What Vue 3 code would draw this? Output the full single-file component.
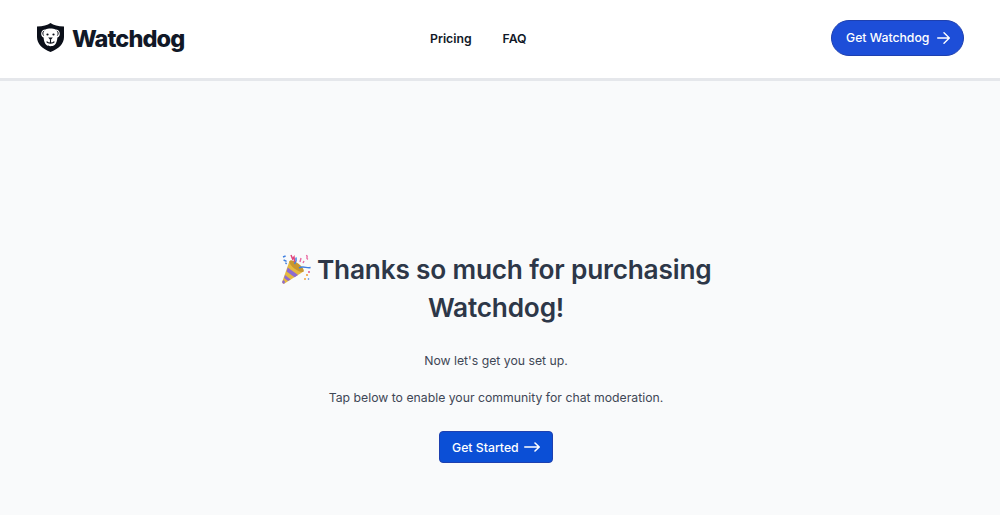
<script setup>
</script>

<template>
  <div class="page">
    <header class="nav">
      <div class="brand">
        <svg class="shield" viewBox="0 0 27 29" width="27" height="29">
          <path d="M13.5 0 C16.5 2.2 21 3.4 27 3.4 V14 C27 21 21.5 25.8 13.5 29 C5.5 25.8 0 21 0 14 V3.4 C6 3.4 10.5 2.2 13.5 0Z" fill="#0b0f19"/>
          <path d="M8.6 6.4 C11 5.2 16 5.2 18.4 6.4 C20.6 6.2 22.6 7.8 22.8 10.2 C23 12.4 22 14 20.4 14.6 C20.2 17.4 19.6 20.2 17.6 22 C15.6 23.6 11.4 23.6 9.4 22 C7.4 20.2 6.8 17.4 6.6 14.6 C5 14 4 12.4 4.2 10.2 C4.4 7.8 6.4 6.2 8.6 6.4Z" fill="#fff"/>
          <path d="M7.2 8 C5.6 8.6 5.4 11 6.6 12.6 M19.8 8 C21.4 8.6 21.6 11 20.4 12.6" stroke="#0b0f19" stroke-width="1" fill="none"/>
          <circle cx="10.5" cy="11.5" r="1.1" fill="#0b0f19"/>
          <circle cx="16.5" cy="11.5" r="1.1" fill="#0b0f19"/>
          <path d="M11.2 14.6 H15.8 L13.5 17.2Z" fill="#0b0f19"/>
          <path d="M13.5 17 V19.6 M9.6 18.6 C11 20.6 16 20.6 17.4 18.6" stroke="#0b0f19" stroke-width="1.1" fill="none"/>
        </svg>
        <span class="wordmark">Watchdog</span>
      </div>
      <nav class="links">
        <a>Pricing</a>
        <a>FAQ</a>
      </nav>
      <button class="pill">
        Get Watchdog
        <svg viewBox="0 0 13 12" width="13" height="12" fill="none" stroke="#fff" stroke-width="1.4" stroke-linecap="round" stroke-linejoin="round">
          <path d="M.7 6 H12.2 M7 .8 L12.3 6 L7 11.2"/>
        </svg>
      </button>
    </header>
    <main class="main">
      <h1 class="title"><svg class="emoji" viewBox="0 0 30 30" width="30" height="30">
          <path d="M8.5 7 L22.5 17.5 L3.5 29.6 C2 30 .9 29 1.3 27.5Z" fill="#e6b93f"/>
          <path d="M6.7 13.5 L17 21 L13.6 23.2 L5.6 17.4Z" fill="#8d6ad2"/>
          <path d="M4 21 L9.6 25.4 L7 27.1 L3.2 24.1Z" fill="#8d6ad2"/>
          <path d="M2.2 26 L4 27.6 L3.5 29.6 C2 30 .9 29 1.3 27.5Z" fill="#8d6ad2"/>
          <ellipse cx="15.6" cy="12.2" rx="3.2" ry="8.8" transform="rotate(-53 15.6 12.2)" fill="#c9962e"/>
          <path d="M13.5 10 C15 8 15.6 6 15 3.5 M18 14 C22 11.6 25.5 14.4 29.6 13.6" stroke="#3f7fe0" stroke-width="1.5" fill="none"/>
          <path d="M2 3 L4.6 2 M2.6 6 L5.6 7.4 M4.5 8.6 L5.6 10" stroke="#3f7fe0" stroke-width="1.4" fill="none"/>
          <path d="M10 1 L11.6 5 L13 3 L13.6 8" stroke="#e0447c" stroke-width="1.5" fill="none"/>
          <path d="M20 4 L19 8 M25 1.4 C28 2 24 4 27 5.4 M23 7 L22 9" stroke="#ea6aa3" stroke-width="1.4" fill="none"/>
          <circle cx="26" cy="21" r="1.1" fill="#f2a33a"/>
          <circle cx="28" cy="18" r=".9" fill="#e0447c"/>
          <circle cx="24" cy="25" r="1" fill="#f2a33a"/>
          <circle cx="27.5" cy="25" r=".8" fill="#3f7fe0"/>
        </svg> Thanks so much for purchasing Watchdog!</h1>
      <p class="line first">Now let's get you set up.</p>
      <p class="line second">Tap below to enable your community for chat moderation.</p>
      <button class="cta">
        Get Started
        <svg viewBox="0 0 16 10" width="16" height="10" fill="none" stroke="#fff" stroke-width="1.6" stroke-linecap="round" stroke-linejoin="round">
          <path d="M.8 5 H15 M11 1 L15.2 5 L11 9"/>
        </svg>
      </button>
    </main>
  </div>
</template>

<style>
html, body { margin: 0; background: #f9fafb; }
</style>

<style scoped>
.page {
  width: 1000px;
  height: 515px;
  overflow: hidden;
  font-family: Inter, "Liberation Sans", sans-serif;
  background: #f9fafb;
  display: flex;
  flex-direction: column;
}
.nav {
  box-sizing: border-box;
  height: 81px;
  flex: none;
  background: #fff;
  border-bottom: 3px solid #e5e7eb;
  padding: 0 36px 3px 37px;
  display: grid;
  grid-template-columns: 393px auto 1fr;
  align-items: center;
}
.brand { display: flex; align-items: center; gap: 8px; }
.shield { display: block; }
.wordmark { padding-top: 2px; font-size: 23.5px; font-weight: 800; letter-spacing: -0.9px; color: #111827; }
.links { display: flex; gap: 31px; padding-top: 2px; font-size: 12.25px; font-weight: 600; color: #111827; }
.pill {
  justify-self: end;
  box-sizing: border-box;
  width: 133px;
  height: 36px;
  padding: 0 13px 0 14px;
  border: 1px solid #1e40af;
  border-radius: 18px;
  background: #1d4ed8;
  color: #fff;
  font: 500 12.25px Inter, "Liberation Sans", sans-serif;
  display: flex;
  align-items: center;
  justify-content: space-between;
}
.main {
  flex: 1;
  display: flex;
  flex-direction: column;
  align-items: center;
  padding: 170px 8px 0 0;
}
.title {
  width: 480px;
  margin: 0;
  text-align: center;
  font-size: 26.25px;
  line-height: 38px;
  font-weight: 600;
  letter-spacing: -0.2px;
  color: #2d3748;
}
.emoji { vertical-align: -5px; }
.line { margin: 0; font-size: 12.25px; line-height: 20px; color: #3f4756; }
.first { margin-top: 24px; }
.second { margin-top: 17px; }
.cta {
  margin-top: 23px;
  box-sizing: border-box;
  width: 114px;
  height: 32px;
  padding: 0 12px;
  border: 1px solid #1e40af;
  border-radius: 4px;
  background: #0b4fd6;
  color: #fff;
  font: 500 12.25px Inter, "Liberation Sans", sans-serif;
  display: flex;
  align-items: center;
  justify-content: space-between;
}
</style>
